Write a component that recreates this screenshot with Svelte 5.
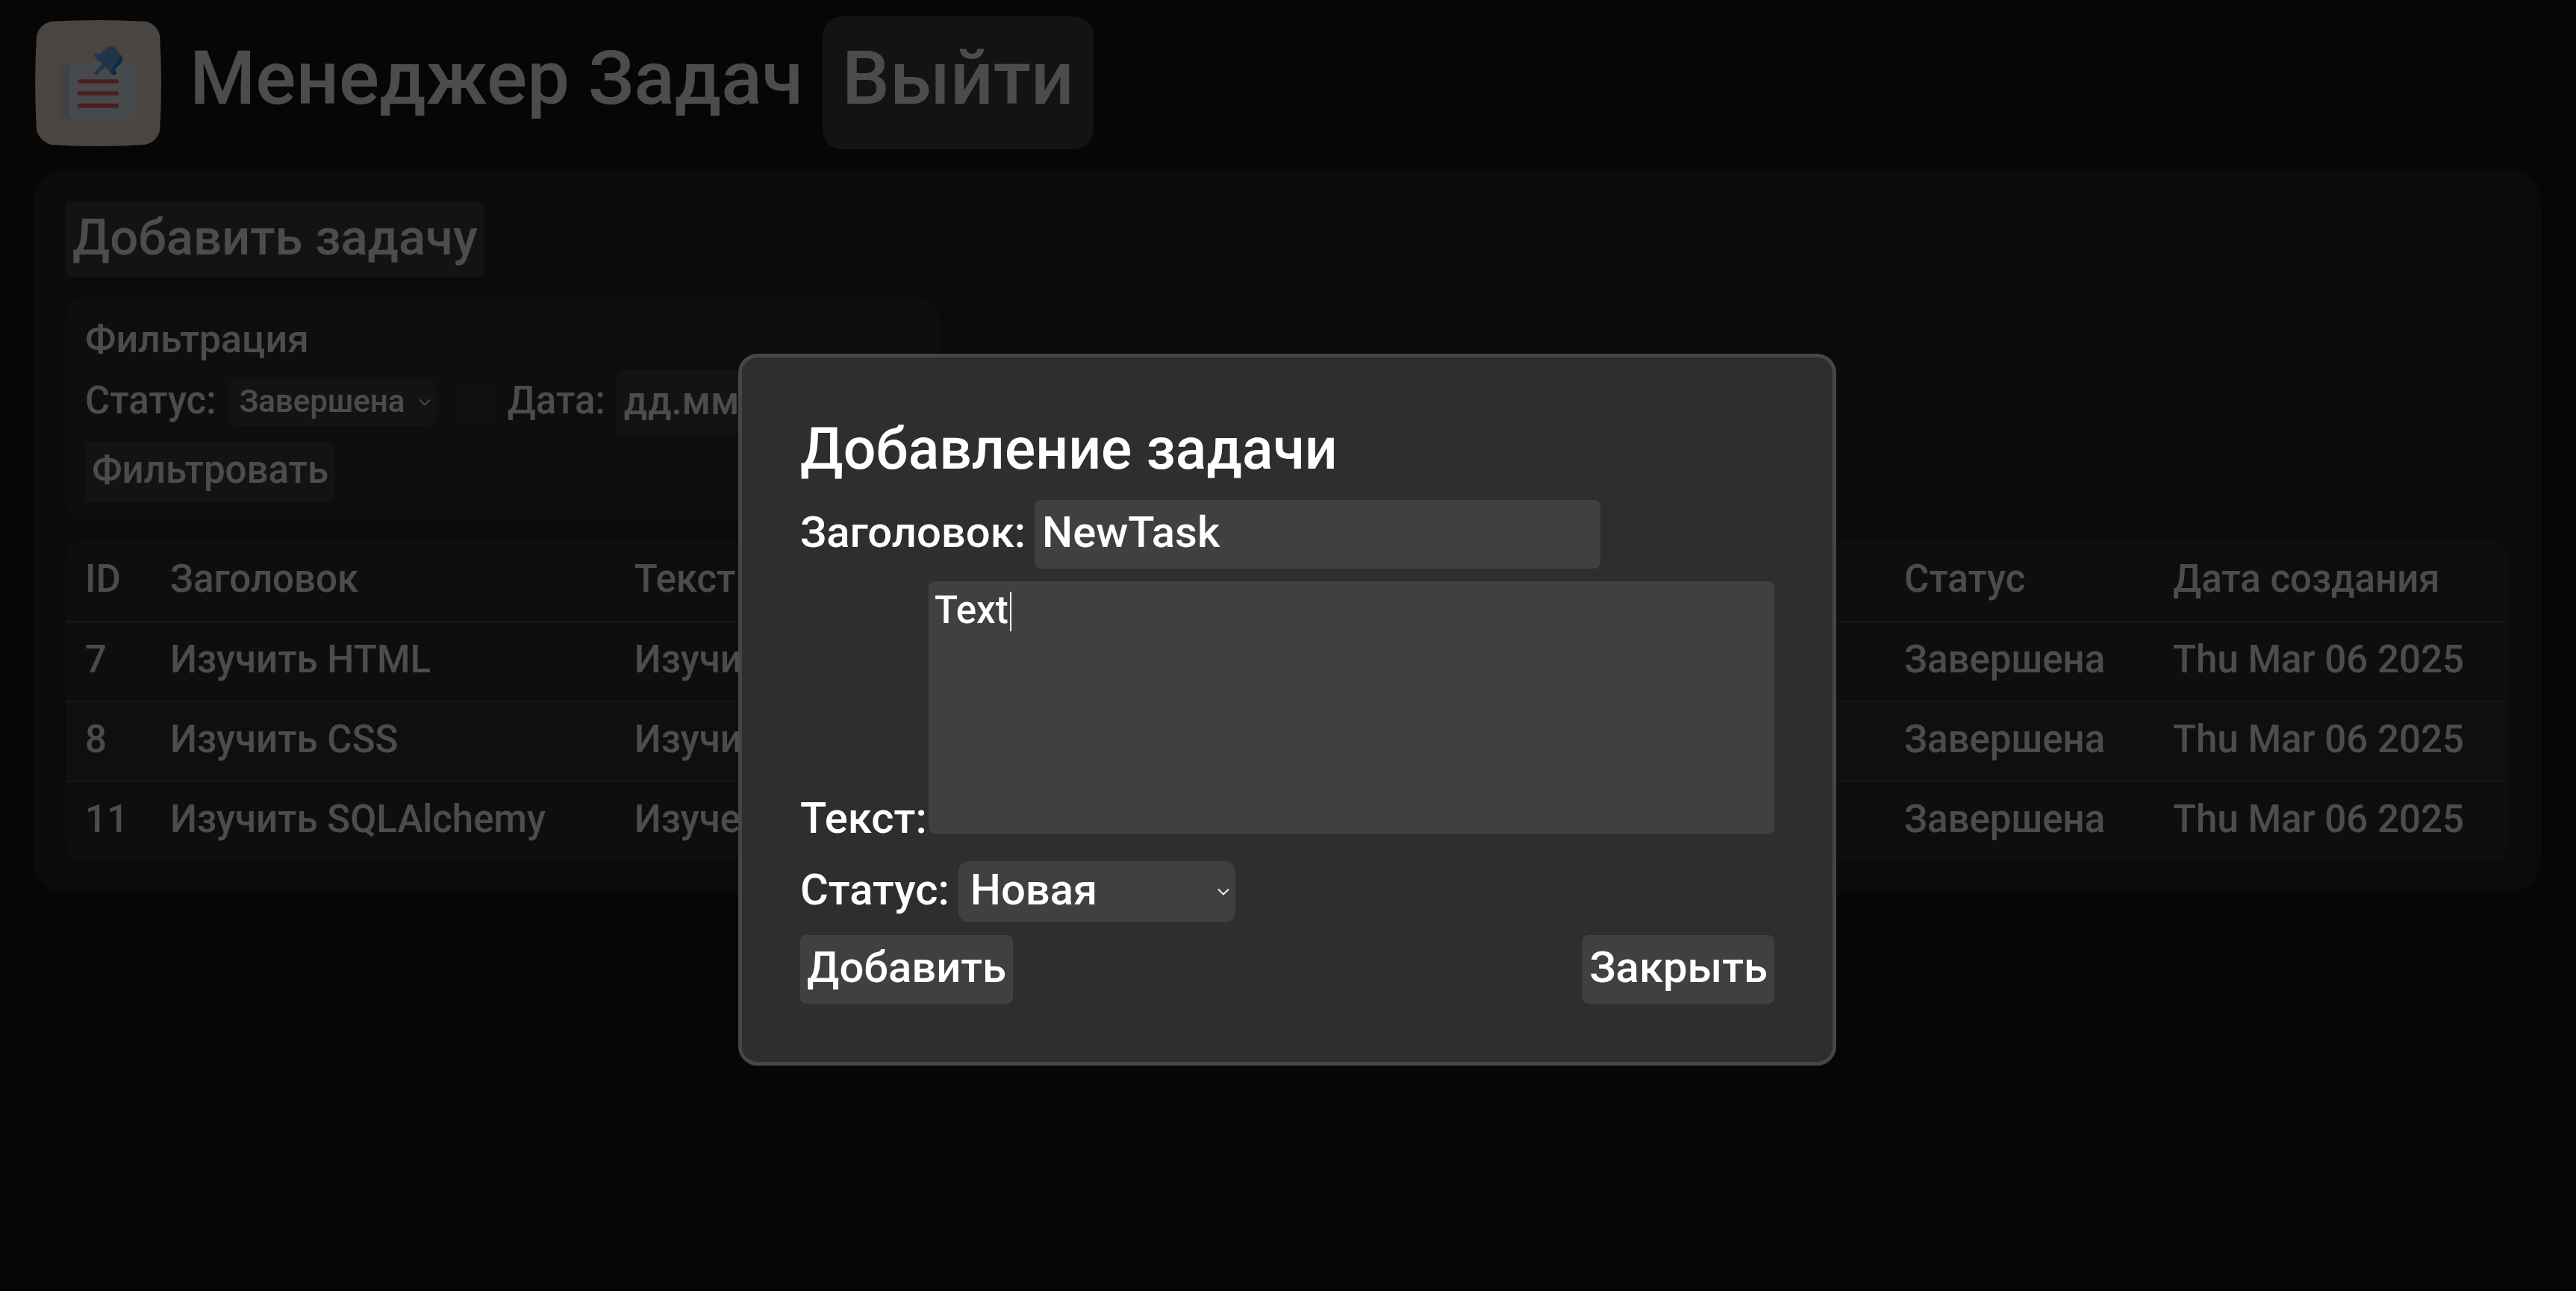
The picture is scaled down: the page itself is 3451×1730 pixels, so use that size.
<script lang="ts">
  const columns = ['ID', 'Заголовок', 'Текст', 'Статус', 'Дата создания'];
  const tasks = [
    { id: 7, title: 'Изучить HTML', text: 'Изучить', status: 'Завершена', date: 'Thu Mar 06 2025' },
    { id: 8, title: 'Изучить CSS', text: 'Изучить', status: 'Завершена', date: 'Thu Mar 06 2025' },
    { id: 11, title: 'Изучить SQLAlchemy', text: 'Изучение', status: 'Завершена', date: 'Thu Mar 06 2025' },
  ];
  const statuses = ['Новая', 'В процессе', 'Завершена'];

  let filterStatus = $state('Завершена');
  let filterByDate = $state(false);
  let filterDate = $state('');
  let newTitle = $state('NewTask');
  let newText = $state('Text');
  let newStatus = $state('Новая');
</script>

{#snippet chevron()}
  <svg class="chevron" viewBox="0 0 16 10" aria-hidden="true">
    <path d="M1 1.5 8 8.5 15 1.5" fill="none" stroke="currentColor" stroke-width="1.8" />
  </svg>
{/snippet}

<div class="page">
  <header>
    <svg class="logo" viewBox="51 51 507 507" role="img" aria-label="Логотип">
      <path fill="#f8e6d8" d="M112 56Q304 46 496 56Q540 66 552 112Q564 304 552 496Q540 540 496 551Q304 565 112 551Q70 536 57 496Q46 304 57 112Q68 70 112 56Z" />
      <path fill="#d2e2ec" d="M186 222h60v231h-60a30 30 0 0 1-30-30V252a30 30 0 0 1 30-30Z" />
      <rect x="189" y="222" width="264" height="231" rx="30" fill="#ecf8ff" />
      <path stroke="#ff646b" stroke-width="17" stroke-linecap="round" d="M230 297H379M230 345H379M230 395H379" />
      <path fill="#2590f7" d="M388 184 398 195Q407 207 400 220L373 248 374 256A8 8 0 0 1 366 270Q355 268 350 254Z" />
      <path fill="#73adf0" d="M306 191 341 160Q355 150 369 160L389 182Q397 194 390 207L360 242 350 246Z" />
      <path stroke="#73adf0" stroke-width="16" stroke-linecap="round" d="M297 193 353 248M332 228 297 263" />
      <circle cx="367" cy="263" r="8" fill="#2590f7" />
    </svg>
    <h1>Менеджер Задач</h1>
    <button class="exit" type="button">Выйти</button>
  </header>

  <main>
    <button class="add" type="button">Добавить задачу</button>

    <form class="filter">
      <h2>Фильтрация</h2>
      <div class="filter-row">
        <label for="filter-status">Статус:</label>
        <span class="select small">
          <select id="filter-status" bind:value={filterStatus}>
            {#each statuses as status}<option>{status}</option>{/each}
          </select>
          {@render chevron()}
        </span>
        <input class="check" type="checkbox" aria-label="Фильтровать по дате" bind:checked={filterByDate} />
        <label for="filter-date">Дата:</label>
        <input class="date" id="filter-date" type="text" placeholder="дд.мм.гггг" bind:value={filterDate} />
      </div>
      <button class="apply" type="button">Фильтровать</button>
    </form>

    <table>
      <colgroup>
        <col class="c-id" /><col class="c-title" /><col class="c-text" /><col class="c-status" /><col />
      </colgroup>
      <thead>
        <tr>{#each columns as column}<th scope="col">{column}</th>{/each}</tr>
      </thead>
      <tbody>
        {#each tasks as task}
          <tr>
            <td>{task.id}</td>
            <td>{task.title}</td>
            <td>{task.text}</td>
            <td>{task.status}</td>
            <td>{task.date}</td>
          </tr>
        {/each}
      </tbody>
    </table>
  </main>
</div>

<div class="backdrop">
  <form class="modal" role="dialog" aria-modal="true" aria-labelledby="modal-title">
    <h2 id="modal-title">Добавление задачи</h2>
    <div class="field">
      <label for="task-title">Заголовок:</label>
      <input id="task-title" type="text" bind:value={newTitle} />
    </div>
    <div class="field text-field">
      <label for="task-text">Текст:</label>
      <div class="text-box">
        <textarea id="task-text" bind:value={newText}></textarea>
        <span class="caret" aria-hidden="true"></span>
      </div>
    </div>
    <div class="field">
      <label for="task-status">Статус:</label>
      <span class="select">
        <select id="task-status" bind:value={newStatus}>
          {#each statuses as status}<option>{status}</option>{/each}
        </select>
        {@render chevron()}
      </span>
    </div>
    <div class="actions">
      <button type="button">Добавить</button>
      <button type="button">Закрыть</button>
    </div>
  </form>
</div>

<style>
  :global(body) {
    background: #141414;
  }

  * {
    box-sizing: border-box;
  }

  .page,
  .backdrop {
    color: #fff;
    font: 500 51px/62px Roboto, sans-serif;
  }

  h1,
  h2 {
    margin: 0;
    font-weight: 500;
  }

  button,
  input,
  textarea,
  select {
    margin: 0;
    border: 0;
    border-radius: 8px;
    background: #404040;
    color: inherit;
    font: inherit;
    outline: none;
  }

  button {
    padding: 0 9px 6px;
    white-space: nowrap;
  }

  label {
    padding-bottom: 6px;
    white-space: nowrap;
  }

  header {
    display: flex;
    align-items: center;
    padding: 22px 44px 0;
    font-size: 101px;
    line-height: 120px;
  }

  .logo {
    width: 169px;
    height: 169px;
    margin: 0 38px 0 3px;
  }

  h1 {
    padding-bottom: 12px;
    font-size: 101px;
  }

  .exit {
    height: 178px;
    margin-left: 26px;
    padding: 0 26px 12px;
    border-radius: 26px;
  }

  main {
    display: flex;
    flex-direction: column;
    align-items: flex-start;
    gap: 26px;
    margin: 27px 47px 0 44px;
    padding: 43px 44px 44px;
    border-radius: 44px;
    background: #252525;
  }

  .add {
    height: 102px;
    font-size: 67px;
  }

  .filter {
    display: flex;
    flex-direction: column;
    align-items: flex-start;
    gap: 10px;
    width: 1169px;
    max-width: 100%;
    padding: 26px;
    border-radius: 26px;
    background: #2f2f2f;
  }

  .filter h2 {
    font-size: 52px;
  }

  .filter-row {
    display: flex;
    align-items: center;
  }

  .filter-row label {
    padding-bottom: 4px;
  }

  .select {
    position: relative;
    display: inline-flex;
    align-items: center;
  }

  .select select {
    width: 371px;
    height: 82px;
    padding: 0 40px 6px 16px;
    border-radius: 14px;
    appearance: none;
  }

  .chevron {
    position: absolute;
    right: 8px;
    width: 16px;
    height: 10px;
    pointer-events: none;
  }

  .small {
    margin: 0 26px 0 15px;
    font-size: 42px;
  }

  .small select {
    width: 280px;
    height: 64px;
    padding: 0 30px 2px 16px;
  }

  .check {
    width: 53px;
    height: 53px;
    margin-right: 16px;
    background: #363636;
    appearance: none;
  }

  .check:checked {
    background: #8a8a8a;
  }

  .date {
    width: 360px;
    height: 86px;
    margin-left: 15px;
    padding: 0 10px 4px;
  }

  .date::placeholder {
    color: inherit;
    opacity: 1;
  }

  .apply {
    height: 81px;
  }

  table {
    width: 100%;
    border-spacing: 0;
    border-radius: 20px;
    background: #2f2f2f;
    table-layout: fixed;
    overflow: hidden;
  }

  .c-id {
    width: 114px;
  }

  .c-title {
    width: 19%;
  }

  .c-text {
    width: 52%;
  }

  .c-status {
    width: 11%;
  }

  th,
  td {
    height: 107px;
    padding: 0 0 6px 26px;
    font-weight: 500;
    text-align: left;
    white-space: nowrap;
  }

  td {
    border-top: 2px solid #505050;
  }

  tbody tr:nth-child(even) {
    background: #333;
  }

  .backdrop {
    position: fixed;
    inset: 0;
    display: flex;
    align-items: flex-start;
    justify-content: center;
    padding: 474px 2px 0 0;
    background: rgba(0, 0, 0, 0.7);
  }

  .modal {
    display: flex;
    flex-direction: column;
    gap: 17px;
    width: 1471px;
    max-width: 96%;
    padding: 78px;
    border: 5px solid #464646;
    border-radius: 26px;
    background: #2e2e2e;
    font-size: 58px;
    line-height: 74px;
  }

  .modal h2 {
    padding-bottom: 6px;
    font-size: 77px;
    line-height: 90px;
  }

  .field {
    display: flex;
    align-items: center;
    gap: 12px;
  }

  .field input {
    width: 758px;
    height: 92px;
    padding: 0 10px 6px;
  }

  .text-field {
    align-items: flex-end;
    justify-content: space-between;
    gap: 0;
  }

  .text-field label {
    padding-bottom: 4px;
  }

  .text-box {
    position: relative;
    width: 1133px;
    height: 358px;
    font-size: 51px;
    line-height: 62px;
  }

  textarea {
    display: block;
    width: 100%;
    height: 338px;
    padding: 8px;
    resize: none;
  }

  .caret {
    position: absolute;
    top: 14px;
    left: 109px;
    width: 2px;
    height: 53px;
    background: #fff;
  }

  .actions {
    display: flex;
    justify-content: space-between;
  }

  .actions button {
    height: 92px;
  }
</style>
